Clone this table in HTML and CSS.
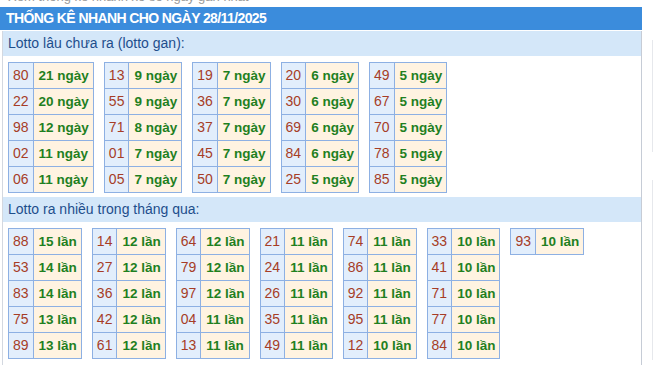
FILE: index.html
```html
<!DOCTYPE html>
<html lang="vi">
<head>
<meta charset="utf-8">
<title>Thống kê nhanh</title>
<link rel="stylesheet" href="styles.css">
</head>
<body>
<div class="page">
  <div class="main">
    <div class="topline"><span>Xem thống kê nhanh xổ số ngày gần nhất</span></div>
    <div class="title">THỐNG KÊ NHANH CHO NGÀY 28/11/2025</div>
    <div class="box">
      <div class="sub">Lotto lâu chưa ra (lotto gan):</div>
      <div class="grid">
        <table class="lt">
          <tr><td class="n">80</td><td class="v">21 ngày</td></tr>
          <tr><td class="n">22</td><td class="v">20 ngày</td></tr>
          <tr><td class="n">98</td><td class="v">12 ngày</td></tr>
          <tr><td class="n">02</td><td class="v">11 ngày</td></tr>
          <tr><td class="n">06</td><td class="v">11 ngày</td></tr>
        </table>
        <table class="lt">
          <tr><td class="n">13</td><td class="v">9 ngày</td></tr>
          <tr><td class="n">55</td><td class="v">9 ngày</td></tr>
          <tr><td class="n">71</td><td class="v">8 ngày</td></tr>
          <tr><td class="n">01</td><td class="v">7 ngày</td></tr>
          <tr><td class="n">05</td><td class="v">7 ngày</td></tr>
        </table>
        <table class="lt">
          <tr><td class="n">19</td><td class="v">7 ngày</td></tr>
          <tr><td class="n">36</td><td class="v">7 ngày</td></tr>
          <tr><td class="n">37</td><td class="v">7 ngày</td></tr>
          <tr><td class="n">45</td><td class="v">7 ngày</td></tr>
          <tr><td class="n">50</td><td class="v">7 ngày</td></tr>
        </table>
        <table class="lt">
          <tr><td class="n">20</td><td class="v">6 ngày</td></tr>
          <tr><td class="n">30</td><td class="v">6 ngày</td></tr>
          <tr><td class="n">69</td><td class="v">6 ngày</td></tr>
          <tr><td class="n">84</td><td class="v">6 ngày</td></tr>
          <tr><td class="n">25</td><td class="v">5 ngày</td></tr>
        </table>
        <table class="lt">
          <tr><td class="n">49</td><td class="v">5 ngày</td></tr>
          <tr><td class="n">67</td><td class="v">5 ngày</td></tr>
          <tr><td class="n">70</td><td class="v">5 ngày</td></tr>
          <tr><td class="n">78</td><td class="v">5 ngày</td></tr>
          <tr><td class="n">85</td><td class="v">5 ngày</td></tr>
        </table>
      </div>
      <div class="sub">Lotto ra nhiều trong tháng qua:</div>
      <div class="grid">
        <table class="lt">
          <tr><td class="n">88</td><td class="v">15 lần</td></tr>
          <tr><td class="n">53</td><td class="v">14 lần</td></tr>
          <tr><td class="n">83</td><td class="v">14 lần</td></tr>
          <tr><td class="n">75</td><td class="v">13 lần</td></tr>
          <tr><td class="n">89</td><td class="v">13 lần</td></tr>
        </table>
        <table class="lt">
          <tr><td class="n">14</td><td class="v">12 lần</td></tr>
          <tr><td class="n">27</td><td class="v">12 lần</td></tr>
          <tr><td class="n">36</td><td class="v">12 lần</td></tr>
          <tr><td class="n">42</td><td class="v">12 lần</td></tr>
          <tr><td class="n">61</td><td class="v">12 lần</td></tr>
        </table>
        <table class="lt">
          <tr><td class="n">64</td><td class="v">12 lần</td></tr>
          <tr><td class="n">79</td><td class="v">12 lần</td></tr>
          <tr><td class="n">97</td><td class="v">12 lần</td></tr>
          <tr><td class="n">04</td><td class="v">11 lần</td></tr>
          <tr><td class="n">13</td><td class="v">11 lần</td></tr>
        </table>
        <table class="lt">
          <tr><td class="n">21</td><td class="v">11 lần</td></tr>
          <tr><td class="n">24</td><td class="v">11 lần</td></tr>
          <tr><td class="n">26</td><td class="v">11 lần</td></tr>
          <tr><td class="n">35</td><td class="v">11 lần</td></tr>
          <tr><td class="n">49</td><td class="v">11 lần</td></tr>
        </table>
        <table class="lt">
          <tr><td class="n">74</td><td class="v">11 lần</td></tr>
          <tr><td class="n">86</td><td class="v">11 lần</td></tr>
          <tr><td class="n">92</td><td class="v">11 lần</td></tr>
          <tr><td class="n">95</td><td class="v">11 lần</td></tr>
          <tr><td class="n">12</td><td class="v">10 lần</td></tr>
        </table>
        <table class="lt">
          <tr><td class="n">33</td><td class="v">10 lần</td></tr>
          <tr><td class="n">41</td><td class="v">10 lần</td></tr>
          <tr><td class="n">71</td><td class="v">10 lần</td></tr>
          <tr><td class="n">77</td><td class="v">10 lần</td></tr>
          <tr><td class="n">84</td><td class="v">10 lần</td></tr>
        </table>
        <table class="lt">
          <tr><td class="n">93</td><td class="v">10 lần</td></tr>
        </table>
      </div>
    </div>
  </div>
  <aside class="side">
    <div class="sbox sbox-a"></div>
    <div class="sbox sbox-b"></div>
  </aside>
</div>
</body>
</html>
```

FILE: styles.css
```css
html, body {
  margin: 0;
  padding: 0;
  background: #ffffff;
}

body {
  font-family: "Liberation Sans", Arial, sans-serif;
  overflow: hidden;
}

.page {
  display: flex;
  align-items: flex-start;
}

.main {
  width: 642px;
  flex: none;
}

.topline {
  height: 5px;
  margin-bottom: 2px;
  overflow: hidden;
  font-size: 13px;
  color: #9a9a9a;
  padding-left: 8px;
}

.topline span {
  display: block;
  line-height: 14px;
  margin-top: -10px;
}

.title {
  height: 23px;
  line-height: 23px;
  background: #3b8cdc;
  color: #ffffff;
  font-weight: bold;
  font-size: 14px;
  letter-spacing: -0.6px;
  padding-left: 6px;
  white-space: nowrap;
}

.box {
  margin-top: 1px;
  margin-left: 2px;
  border-left: 1px solid #d3d8e0;
  border-right: 1px solid #c6ccd6;
  padding-bottom: 8px;
}

.sub {
  height: 25px;
  line-height: 25px;
  background: #d4e7f9;
  color: #1e4e8c;
  font-size: 14px;
  padding-left: 5px;
}

.grid {
  display: flex;
  flex-wrap: wrap;
  align-items: flex-start;
  gap: 10px;
  padding: 6px 5px 4px 5px;
}

.lt {
  border-collapse: collapse;
}

.lt td {
  border: 1px solid #8db0e3;
  line-height: 25px;
  white-space: nowrap;
}

.lt .n {
  background: #e2eefc;
  color: #a63d27;
  font-size: 14px;
  padding: 0 4px;
}

.lt .v {
  background: #fff3e1;
  color: #1f801f;
  font-size: 13.5px;
  font-weight: bold;
  padding: 0 4px 0 5px;
}

.side {
  margin-left: 10px;
  flex: none;
  width: 20px;
}

.sbox {
  border-left: 1px solid #e6e8ec;
}

.sbox-a {
  margin-top: 40px;
  height: 112px;
}

.sbox-b {
  margin-top: 28px;
  height: 180px;
}
```
